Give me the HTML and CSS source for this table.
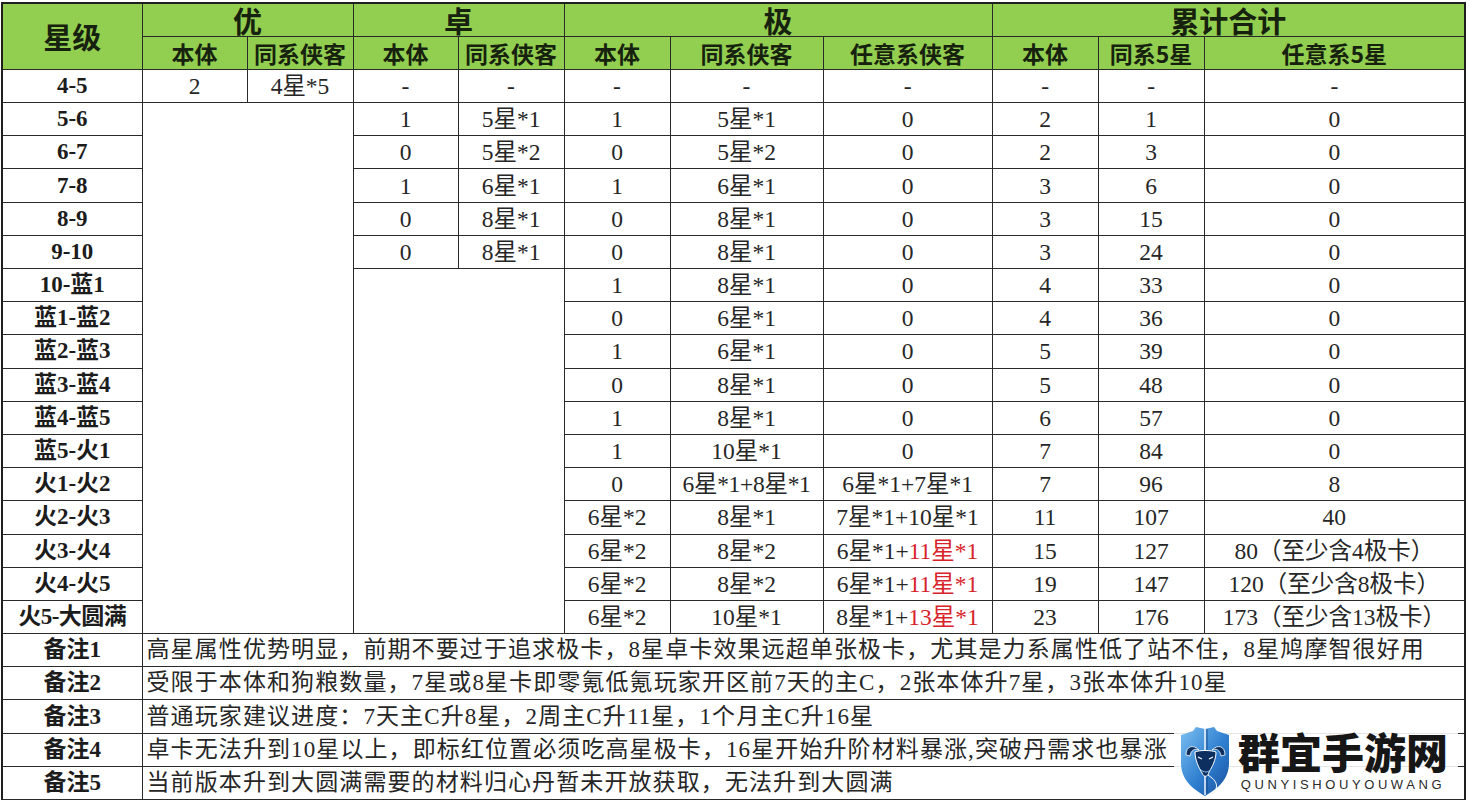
FILE: index.html
```html
<!DOCTYPE html>
<html lang="zh-CN">
<head>
<meta charset="utf-8">
<title>星级升级材料表</title>
<link rel="stylesheet" href="styles.css">
</head>
<body>
<div class="page">
<table class="sheet">
  <colgroup>
    <col class="w-lvl"><col class="w-a"><col class="w-b"><col class="w-a"><col class="w-b">
    <col class="w-b"><col class="w-c"><col class="w-d"><col class="w-b"><col class="w-b"><col class="w-e">
  </colgroup>
  <thead>
    <tr class="hrow">
      <th rowspan="2" class="lvl-head">星级</th>
      <th colspan="2" class="grp">优</th>
      <th colspan="2" class="grp">卓</th>
      <th colspan="3" class="grp">极</th>
      <th colspan="3" class="grp">累计合计</th>
    </tr>
    <tr class="hrow">
      <th class="sub">本体</th><th class="sub">同系侠客</th>
      <th class="sub">本体</th><th class="sub">同系侠客</th>
      <th class="sub">本体</th><th class="sub">同系侠客</th><th class="sub">任意系侠客</th>
      <th class="sub">本体</th><th class="sub">同系5星</th><th class="sub">任意系5星</th>
    </tr>
  </thead>
  <tbody>
    <tr><td class="lvl">4-5</td><td>2</td><td>4星*5</td><td>-</td><td>-</td><td>-</td><td>-</td><td>-</td><td>-</td><td>-</td><td>-</td></tr>
    <tr><td class="lvl">5-6</td><td rowspan="16" colspan="2" class="blank"></td><td>1</td><td>5星*1</td><td>1</td><td>5星*1</td><td>0</td><td>2</td><td>1</td><td>0</td></tr>
    <tr><td class="lvl">6-7</td><td>0</td><td>5星*2</td><td>0</td><td>5星*2</td><td>0</td><td>2</td><td>3</td><td>0</td></tr>
    <tr><td class="lvl">7-8</td><td>1</td><td>6星*1</td><td>1</td><td>6星*1</td><td>0</td><td>3</td><td>6</td><td>0</td></tr>
    <tr><td class="lvl">8-9</td><td>0</td><td>8星*1</td><td>0</td><td>8星*1</td><td>0</td><td>3</td><td>15</td><td>0</td></tr>
    <tr><td class="lvl">9-10</td><td>0</td><td>8星*1</td><td>0</td><td>8星*1</td><td>0</td><td>3</td><td>24</td><td>0</td></tr>
    <tr><td class="lvl">10-蓝1</td><td rowspan="11" colspan="2" class="blank"></td><td>1</td><td>8星*1</td><td>0</td><td>4</td><td>33</td><td>0</td></tr>
    <tr><td class="lvl">蓝1-蓝2</td><td>0</td><td>6星*1</td><td>0</td><td>4</td><td>36</td><td>0</td></tr>
    <tr><td class="lvl">蓝2-蓝3</td><td>1</td><td>6星*1</td><td>0</td><td>5</td><td>39</td><td>0</td></tr>
    <tr><td class="lvl">蓝3-蓝4</td><td>0</td><td>8星*1</td><td>0</td><td>5</td><td>48</td><td>0</td></tr>
    <tr><td class="lvl">蓝4-蓝5</td><td>1</td><td>8星*1</td><td>0</td><td>6</td><td>57</td><td>0</td></tr>
    <tr><td class="lvl">蓝5-火1</td><td>1</td><td>10星*1</td><td>0</td><td>7</td><td>84</td><td>0</td></tr>
    <tr><td class="lvl">火1-火2</td><td>0</td><td class="tight">6星*1+8星*1</td><td>6星*1+7星*1</td><td>7</td><td>96</td><td>8</td></tr>
    <tr><td class="lvl">火2-火3</td><td>6星*2</td><td>8星*1</td><td>7星*1+10星*1</td><td>11</td><td>107</td><td>40</td></tr>
    <tr><td class="lvl">火3-火4</td><td>6星*2</td><td>8星*2</td><td>6星*1+<span class="red">11星*1</span></td><td>15</td><td>127</td><td>80（至少含4极卡）</td></tr>
    <tr><td class="lvl">火4-火5</td><td>6星*2</td><td>8星*2</td><td>6星*1+<span class="red">11星*1</span></td><td>19</td><td>147</td><td>120（至少含8极卡）</td></tr>
    <tr><td class="lvl lvl-tight">火5-大圆满</td><td>6星*2</td><td>10星*1</td><td>8星*1+<span class="red">13星*1</span></td><td>23</td><td>176</td><td>173（至少含13极卡）</td></tr>
    <tr><td class="lvl">备注1</td><td colspan="10" class="note">高星属性优势明显，前期不要过于追求极卡，8星卓卡效果远超单张极卡，尤其是力系属性低了站不住，8星鸠摩智很好用</td></tr>
    <tr><td class="lvl">备注2</td><td colspan="10" class="note">受限于本体和狗粮数量，7星或8星卡即零氪低氪玩家开区前7天的主C，2张本体升7星，3张本体升10星</td></tr>
    <tr><td class="lvl">备注3</td><td colspan="10" class="note">普通玩家建议进度：7天主C升8星，2周主C升11星，1个月主C升16星</td></tr>
    <tr><td class="lvl">备注4</td><td colspan="10" class="note">卓卡无法升到10星以上，即标红位置必须吃高星极卡，16星开始升阶材料暴涨,突破丹需求也暴涨</td></tr>
    <tr><td class="lvl">备注5</td><td colspan="10" class="note">当前版本升到大圆满需要的材料归心丹暂未开放获取，无法升到大圆满</td></tr>
    <tr><td class="lvl"></td><td colspan="10" class="note"></td></tr>
  </tbody>
</table>

<div class="watermark">
  <svg class="shield" viewBox="0 0 54 72" width="54" height="72" aria-hidden="true">
    <defs>
      <linearGradient id="sg" x1="0" y1="0" x2="1" y2="1">
        <stop offset="0" stop-color="#7cc0f2"/>
        <stop offset="0.55" stop-color="#2f7fd0"/>
        <stop offset="1" stop-color="#174f9c"/>
      </linearGradient>
    </defs>
    <path d="M3 10 L15 6 L18 2 L27 4 L36 2 L39 6 L51 10 L51 38 C51 55 39 64 27 71 C15 64 3 55 3 38 Z" fill="url(#sg)"/>
    <path d="M27 4 L27 70" stroke="#ffffff" stroke-width="1.4"/>
    <path d="M29 4 L29 68" stroke="#0f3d7a" stroke-width="0.8"/>
    <path d="M8 30 C8 21 15 19 21 25 C17 23 13 25 12 31 Z" fill="#0c2f60" stroke="#ffffff" stroke-width="0.8"/>
    <path d="M47 30 C47 21 40 19 34 25 C38 23 42 25 43 31 Z" fill="#0c2f60" stroke="#ffffff" stroke-width="0.8"/>
    <path d="M17 27 C21 25 33 25 38 27 C38 35 34 42 31 47 C30 52 26 53 24 48 C21 43 17 35 17 27 Z" fill="#0c2f60" stroke="#ffffff" stroke-width="1"/>
    <path d="M20 32 L24 34 M35 32 L31 34" stroke="#ffffff" stroke-width="1.2"/>
    <path d="M22 44 C26 48 30 48 33 44" stroke="#8fc6f2" stroke-width="1" fill="none"/>
    <path d="M30 50 C36 54 40 58 38 64" stroke="#ffffff" stroke-width="1" fill="none"/>
  </svg>
  <div class="wm-text">
    <div class="wm-cn">群宜手游网</div>
    <div class="wm-en">QUNYISHOUYOUWANG</div>
  </div>
</div>
</div>
</body>
</html>
```

FILE: styles.css
```css
html, body {
  margin: 0;
  padding: 0;
  background: #ffffff;
}

.page {
  position: relative;
  width: 1470px;
  height: 800px;
  overflow: hidden;
  padding-top: 2px;
  box-sizing: border-box;
}

.sheet {
  border-collapse: collapse;
  table-layout: fixed;
  width: 1462px;
  margin-left: 1px;
  font-family: "Liberation Serif", "Noto Sans CJK SC", serif;
  color: #262626;
  border: 2px solid #1f1f1f;
}

.w-lvl { width: 140px; }
.w-a { width: 105px; }
.w-b { width: 106px; }
.w-c { width: 153px; }
.w-d { width: 169px; }
.w-e { width: 261px; }

.sheet tr {
  height: 33.2px;
}

.sheet th,
.sheet td {
  border: 1px solid #2a2a2a;
  padding: 0;
  text-align: center;
  vertical-align: middle;
  white-space: nowrap;
  line-height: 26px;
}

.sheet td {
  font-size: 23.5px;
  font-weight: 400;
  overflow: hidden;
}

.sheet td.tight {
  letter-spacing: -0.3px;
}

.sheet th {
  background: #92cf50;
  color: #17220e;
  font-family: "Noto Sans CJK SC", "Liberation Sans", sans-serif;
  font-weight: 700;
  overflow: visible;
}

.lvl-head {
  font-size: 29px;
}

.grp {
  font-size: 29px;
  vertical-align: bottom;
  line-height: 29px;
}

.sub {
  font-size: 23px;
}

.sheet td.lvl {
  font-weight: 700;
  font-size: 23px;
  color: #1c1c1c;
  font-family: "Liberation Serif", "Noto Sans CJK SC", serif;
}

.sheet td.lvl-tight {
  letter-spacing: -0.5px;
}

.blank {
  background: #ffffff;
}

.red {
  color: #d8232a;
}

.sheet td.note {
  text-align: left;
  padding-left: 4px;
  font-size: 23px;
  letter-spacing: 1.1px;
}

.watermark {
  position: absolute;
  left: 1174px;
  top: 724px;
  width: 284px;
  height: 74px;
  display: flex;
  align-items: center;
  gap: 6px;
  padding-left: 4px;
  box-sizing: border-box;
  background: rgba(255, 255, 255, 0.88);
}

.shield {
  display: block;
  flex: none;
}

.wm-text {
  display: flex;
  flex-direction: column;
  align-items: center;
}

.wm-cn {
  font-family: "Noto Sans CJK SC", sans-serif;
  font-weight: 900;
  font-size: 42px;
  line-height: 42px;
  color: #161616;
}

.wm-en {
  font-family: "Liberation Sans", "Noto Sans", sans-serif;
  font-size: 13px;
  line-height: 14px;
  letter-spacing: 3.6px;
  color: #2a2a2a;
  margin-top: 6px;
}
```
